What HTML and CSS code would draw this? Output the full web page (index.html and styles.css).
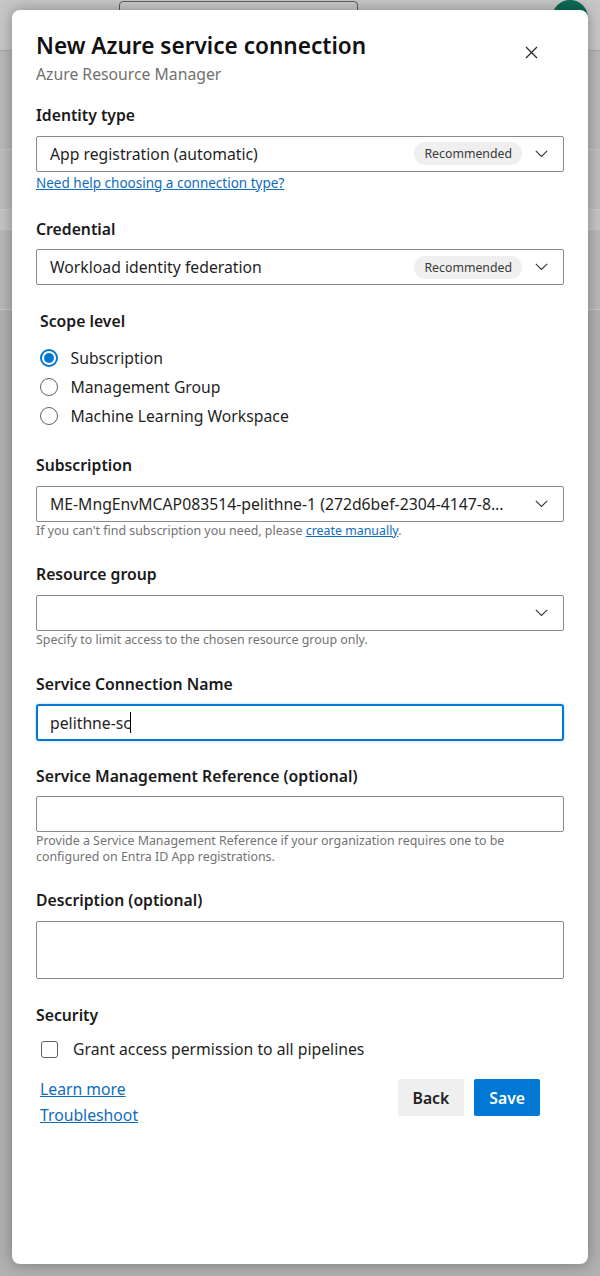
FILE: index.html
```html
<!DOCTYPE html>
<html lang="en">
<head>
<meta charset="utf-8">
<title>New Azure service connection</title>
<link rel="stylesheet" href="styles.css">
</head>
<body>
<div class="page">
  <header class="topbar">
    <div class="search"></div>
    <div class="avatar"></div>
  </header>
  <div class="bg-rows">
    <div class="bg-row row-a"></div>
    <div class="bg-row row-b"></div>
    <div class="bg-row row-c"></div>
    <div class="bg-row row-d"></div>
  </div>
</div>

<div class="overlay">
  <div class="dialog">
    <div class="dlg-head">
      <div class="titles">
        <h1 class="title">New Azure service connection</h1>
        <div class="subtitle">Azure Resource Manager</div>
      </div>
      <button class="close" aria-label="Close">
        <svg width="13" height="13" viewBox="0 0 13 13"><path d="M1 1 L12 12 M12 1 L1 12" stroke="#2b2b2b" stroke-width="1.3" fill="none"/></svg>
      </button>
    </div>

    <div class="field f-identity">
      <div class="label">Identity type</div>
      <div class="select">
        <span class="select-text">App registration (automatic)</span>
        <span class="badge">Recommended</span>
        <svg class="chev" viewBox="0 0 13 8"><path d="M0.8 0.8 L6.5 6.5 L12.2 0.8" stroke="#333" stroke-width="1.1" fill="none"/></svg>
      </div>
      <a class="link help-link" href="#">Need help choosing a connection type?</a>
    </div>

    <div class="field f-credential">
      <div class="label">Credential</div>
      <div class="select">
        <span class="select-text">Workload identity federation</span>
        <span class="badge">Recommended</span>
        <svg class="chev" viewBox="0 0 13 8"><path d="M0.8 0.8 L6.5 6.5 L12.2 0.8" stroke="#333" stroke-width="1.1" fill="none"/></svg>
      </div>
    </div>

    <div class="field f-scope">
      <div class="label">Scope level</div>
      <div class="radios">
        <div class="radio-row"><span class="radio checked"></span><span>Subscription</span></div>
        <div class="radio-row"><span class="radio"></span><span>Management Group</span></div>
        <div class="radio-row"><span class="radio"></span><span>Machine Learning Workspace</span></div>
      </div>
    </div>

    <div class="field f-sub">
      <div class="label">Subscription</div>
      <div class="select">
        <span class="select-text">ME-MngEnvMCAP083514-pelithne-1 (272d6bef-2304-4147-8...</span>
        <svg class="chev" viewBox="0 0 13 8"><path d="M0.8 0.8 L6.5 6.5 L12.2 0.8" stroke="#333" stroke-width="1.1" fill="none"/></svg>
      </div>
      <div class="help">If you can't find subscription you need, please <a class="link" href="#">create manually</a>.</div>
    </div>

    <div class="field f-rg">
      <div class="label">Resource group</div>
      <div class="select">
        <span class="select-text"></span>
        <svg class="chev" viewBox="0 0 13 8"><path d="M0.8 0.8 L6.5 6.5 L12.2 0.8" stroke="#333" stroke-width="1.1" fill="none"/></svg>
      </div>
      <div class="help">Specify to limit access to the chosen resource group only.</div>
    </div>

    <div class="field f-name">
      <div class="label">Service Connection Name</div>
      <div class="input focused"><span>pelithne-sc</span><span class="caret"></span></div>
    </div>

    <div class="field f-ref">
      <div class="label">Service Management Reference (optional)</div>
      <div class="input"></div>
      <div class="help">Provide a Service Management Reference if your organization requires one to be configured on Entra ID App registrations.</div>
    </div>

    <div class="field f-desc">
      <div class="label">Description (optional)</div>
      <div class="input textarea"></div>
    </div>

    <div class="field f-sec">
      <div class="label">Security</div>
      <div class="check-row"><span class="checkbox"></span><span>Grant access permission to all pipelines</span></div>
    </div>

    <div class="footer">
      <div class="footer-links">
        <a class="link" href="#">Learn more</a>
        <a class="link" href="#">Troubleshoot</a>
      </div>
      <div class="buttons">
        <button class="btn btn-back">Back</button>
        <button class="btn btn-save">Save</button>
      </div>
    </div>
  </div>
</div>
</body>
</html>
```

FILE: styles.css
```css
html, body {
  margin: 0;
  padding: 0;
}

body {
  width: 600px;
  height: 1276px;
  overflow: hidden;
  position: relative;
  background: #b0b0b0;
  font-family: "Noto Sans", "Open Sans", sans-serif;
  font-size: 15.75px;
  line-height: 22px;
  color: #1c1c1c;
}

/* ---------- dimmed page behind the dialog ---------- */
.topbar {
  height: 51px;
  background: #c6c6c6;
  border-bottom: 1px solid #a4a4a4;
  display: flex;
  align-items: flex-start;
  padding-left: 119px;
  box-sizing: border-box;
}

.search {
  width: 239px;
  height: 40px;
  margin-top: 1px;
  border: 1px solid #5c5c5c;
  border-radius: 4px;
  background: #c9c9c9;
  box-sizing: border-box;
}

.avatar {
  width: 36px;
  height: 36px;
  margin-left: auto;
  margin-right: 12px;
  margin-top: 0;
  border-radius: 50%;
  background: #0c6a58;
}

.bg-row {
  border-bottom: 1px solid #c8c8c8;
  background: #b8b8b8;
}
.row-a { height: 98px; }
.row-b { height: 59px; background: #bcbcbc; }
.row-c { height: 19px; background: #c3c3c3; }
.row-d { height: 79px; background: #b7b7b7; }

/* ---------- dialog ---------- */
.overlay {
  position: absolute;
  inset: 0;
  padding: 10px 12px 12px;
  display: flex;
  box-sizing: border-box;
}

.dialog {
  flex: 1;
  background: #fff;
  border-radius: 8px;
  box-shadow: 0 0 14px rgba(0, 0, 0, 0.32);
  padding: 21px 24px 0;
  display: flex;
  flex-direction: column;
  box-sizing: border-box;
}

.dlg-head {
  display: flex;
  align-items: flex-start;
}

.titles {
  flex: 1;
}

.title {
  margin: 0;
  font-size: 22.6px;
  line-height: 30px;
  font-weight: 600;
  color: #111;
}

.subtitle {
  margin-top: 2px;
  color: #707070;
}

.close {
  width: 32px;
  height: 32px;
  margin-top: 5px;
  margin-right: 17px;
  padding: 0;
  border: none;
  background: transparent;
  display: flex;
  align-items: center;
  justify-content: center;
}

.label {
  font-weight: 600;
  color: #1a1a1a;
  margin-bottom: 9.5px;
}

.field {
  display: flex;
  flex-direction: column;
  align-items: stretch;
}

.f-identity { margin-top: 19px; }
.f-credential { margin-top: 26px; }
.f-scope { margin-top: 25px; padding-left: 4px; }
.f-sub { margin-top: 27px; }
.f-rg { margin-top: 23.5px; }
.f-name { margin-top: 24px; }
.f-ref { margin-top: 23.5px; }
.f-desc { margin-top: 23.5px; }
.f-sec { margin-top: 25px; }

.select {
  height: 36px;
  border: 1px solid #8a8a8a;
  border-radius: 2px;
  display: flex;
  align-items: center;
  padding: 0 15px 0 13px;
  box-sizing: border-box;
  color: #1f1f1f;
}

.select-text {
  flex: 1;
  min-width: 0;
  white-space: nowrap;
  overflow: hidden;
  text-overflow: ellipsis;
}

.badge {
  flex: none;
  height: 23px;
  padding: 0 10px;
  border-radius: 12px;
  background: #efefef;
  color: #3a3a3a;
  font-size: 12.3px;
  line-height: 23px;
  margin-left: 8px;
}

.chev {
  flex: none;
  width: 13px;
  height: 8px;
  margin-left: 13px;
}

.link {
  color: #0f6cbd;
  text-decoration: underline;
}

.help-link {
  font-size: 13.5px;
  line-height: 17px;
  margin-top: 3px;
  align-self: flex-start;
}

.help {
  font-size: 12.4px;
  line-height: 16.5px;
  color: #737373;
  margin-top: 1.5px;
}

.f-ref .help { margin-top: 0.5px; }

/* radios */
.label + .radios { margin-top: 5.5px; }

.radios {
  display: flex;
  flex-direction: column;
  gap: 7px;
}

.radio-row {
  display: flex;
  align-items: center;
  gap: 12.5px;
  color: #1f1f1f;
}

.radio {
  flex: none;
  width: 18px;
  height: 18px;
  border: 1px solid #616161;
  border-radius: 50%;
  box-sizing: border-box;
}

.radio.checked {
  border: 2px solid #0078d4;
}

.radio.checked::after {
  content: "";
  display: block;
  width: 10px;
  height: 10px;
  margin: 2px;
  border-radius: 50%;
  background: #0078d4;
}

/* inputs */
.input {
  height: 36px;
  border: 1px solid #8a8a8a;
  border-radius: 2px;
  box-sizing: border-box;
  display: flex;
  align-items: center;
  padding-left: 13px;
  color: #1f1f1f;
}

.input.focused {
  height: 37px;
  border: 2px solid #0078d4;
  border-radius: 3px;
  padding-left: 12px;
  box-shadow: 0 0 3px rgba(0, 120, 212, 0.35);
}

.caret {
  display: inline-block;
  width: 1px;
  height: 21px;
  background: #000;
  margin-left: -1px;
}

.textarea {
  height: 58px;
}

/* checkbox */
.label + .check-row { margin-top: 3px; }

.check-row {
  display: flex;
  align-items: center;
  gap: 15px;
  padding-left: 5px;
  color: #1f1f1f;
}

.checkbox {
  flex: none;
  width: 17px;
  height: 17px;
  border: 1px solid #616161;
  border-radius: 3px;
  box-sizing: border-box;
}

/* footer */
.footer {
  margin-top: 16px;
  display: flex;
  justify-content: space-between;
  align-items: flex-start;
  padding: 0 24px 0 4px;
}

.footer-links {
  display: flex;
  flex-direction: column;
  line-height: 26px;
  align-items: flex-start;
}

.buttons {
  display: flex;
  gap: 10px;
  margin-top: 3px;
}

.btn {
  height: 37px;
  padding: 0 15px;
  border: none;
  border-radius: 2px;
  font-family: "Noto Sans", "Open Sans", sans-serif;
  font-size: 15.75px;
  font-weight: 600;
}

.btn-back {
  background: #efefef;
  color: #1f1f1f;
}

.btn-save {
  background: #0078d4;
  color: #fff;
}
```
